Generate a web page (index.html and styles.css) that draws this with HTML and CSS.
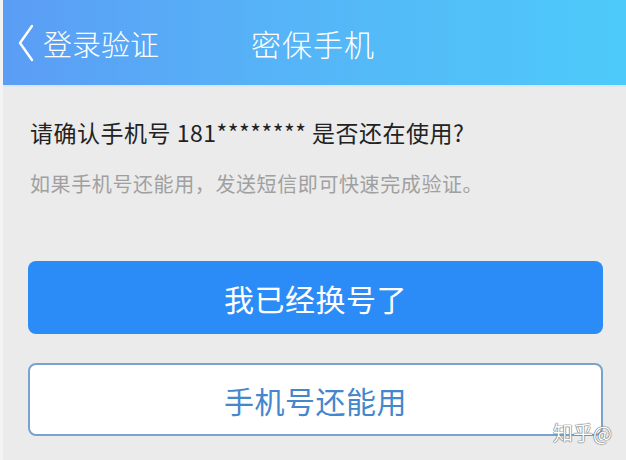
FILE: index.html
```html
<!DOCTYPE html>
<html lang="zh-CN">
<head>
  <meta charset="UTF-8">
  <title>密保手机</title>
  <link rel="stylesheet" href="styles.css">
</head>
<body>
  <div class="page">
    <div class="header">
      <div class="back">
        <svg class="chevron" width="18" height="38" viewBox="0 0 18 38">
          <polyline points="15,2 3,19 15,36" fill="none" stroke="#ffffff" stroke-width="2.4" stroke-linecap="round" stroke-linejoin="round"/>
        </svg>
        <span>登录验证</span>
      </div>
      <div class="title">密保手机</div>
    </div>

    <div class="content">
      <p class="question">请确认手机号 181******** 是否还在使用?</p>
      <p class="hint">如果手机号还能用，发送短信即可快速完成验证。</p>

      <div class="actions">
        <button class="btn btn-primary">我已经换号了</button>
        <button class="btn btn-outline">手机号还能用</button>
      </div>
    </div>

    <div class="watermark">知乎@</div>
  </div>
</body>
</html>
```

FILE: styles.css
```css
body {
  margin: 0;
  font-family: "Noto Sans CJK SC", "Noto Sans", sans-serif;
  background-color: #ebebeb;
}

.page {
  position: relative;
  width: 626px;
  height: 460px;
  overflow: hidden;
  border-left: 3px solid #f3f3f5;
  box-sizing: border-box;
}

.header {
  height: 85px;
  display: flex;
  align-items: center;
  background: linear-gradient(90deg, #5b9df5 0%, #56b4f7 45%, #4dcafa 100%);
  border-bottom: 2px solid #dbe6ef;
  color: white;
  font-weight: 300;
}

.back {
  display: flex;
  align-items: center;
  margin-left: 14px;
  font-size: 29px;
}

.chevron {
  margin-right: 8px;
}

.title {
  margin-left: 92px;
  font-size: 30px;
  letter-spacing: 1px;
}

.content {
  padding: 0 23px 0 25px;
}

.question {
  margin: 27px 0 0 2px;
  font-size: 23px;
  color: #222;
  line-height: 36px;
  letter-spacing: 0.5px;
}

.hint {
  margin: 20px 0 0 2px;
  font-size: 20px;
  color: #a0a0a0;
  line-height: 28px;
  letter-spacing: 0.6px;
}

.actions {
  margin-top: 63px;
  display: flex;
  flex-direction: column;
  gap: 29px;
}

.btn {
  height: 73px;
  width: 100%;
  border-radius: 8px;
  font-family: inherit;
  font-size: 30px;
  letter-spacing: 0.5px;
}

.btn-primary {
  background-color: #2b8cf7;
  border: none;
  color: white;
}

.btn-outline {
  background-color: #ffffff;
  border: 2px solid #7aa3cc;
  color: #4487cc;
}

.watermark {
  position: absolute;
  right: 14px;
  bottom: 13px;
  font-size: 20px;
  color: white;
  text-shadow: 0 0 1px #666, 0 0 1px #666, 0 0 1px #666;
}
```
